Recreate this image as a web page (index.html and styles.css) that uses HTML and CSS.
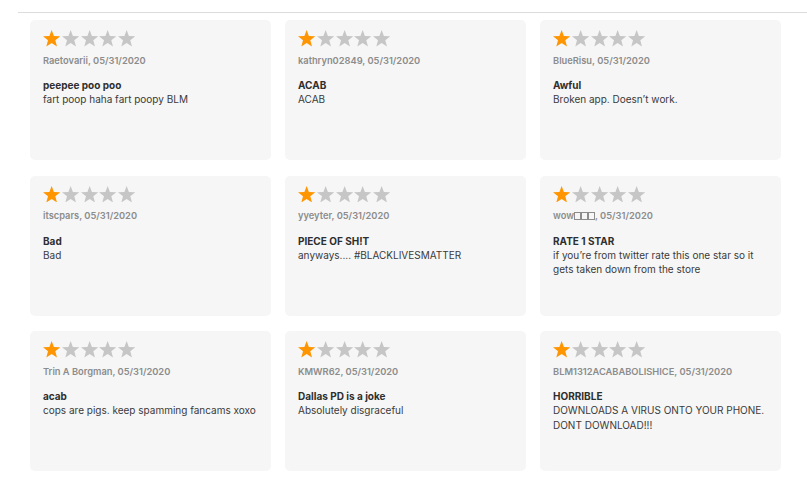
FILE: index.html
```html
<!DOCTYPE html>
<html>
<head>
<meta charset="utf-8">
<link rel="stylesheet" href="styles.css">
</head>
<body>
<svg width="0" height="0" class="defs">
  <defs>
    <polygon id="star" points="10,0 12.6,6.94 20,7.27 14.2,11.88 16.18,19.02 10,14.94 3.82,19.02 5.8,11.88 0,7.27 7.4,6.94"/>
  </defs>
</svg>
<main class="page">
  <section class="grid">
    <article class="card">
      <div class="stars"><svg viewBox="0 0 20 19.02" class="on"><use href="#star"/></svg><svg viewBox="0 0 20 19.02"><use href="#star"/></svg><svg viewBox="0 0 20 19.02"><use href="#star"/></svg><svg viewBox="0 0 20 19.02"><use href="#star"/></svg><svg viewBox="0 0 20 19.02"><use href="#star"/></svg></div>
      <div class="meta">Raetovarii, 05/31/2020</div>
      <div class="title">peepee poo poo</div>
      <div class="body">fart poop haha fart poopy BLM</div>
    </article>
    <article class="card">
      <div class="stars"><svg viewBox="0 0 20 19.02" class="on"><use href="#star"/></svg><svg viewBox="0 0 20 19.02"><use href="#star"/></svg><svg viewBox="0 0 20 19.02"><use href="#star"/></svg><svg viewBox="0 0 20 19.02"><use href="#star"/></svg><svg viewBox="0 0 20 19.02"><use href="#star"/></svg></div>
      <div class="meta">kathryn02849, 05/31/2020</div>
      <div class="title">ACAB</div>
      <div class="body">ACAB</div>
    </article>
    <article class="card">
      <div class="stars"><svg viewBox="0 0 20 19.02" class="on"><use href="#star"/></svg><svg viewBox="0 0 20 19.02"><use href="#star"/></svg><svg viewBox="0 0 20 19.02"><use href="#star"/></svg><svg viewBox="0 0 20 19.02"><use href="#star"/></svg><svg viewBox="0 0 20 19.02"><use href="#star"/></svg></div>
      <div class="meta">BlueRisu, 05/31/2020</div>
      <div class="title">Awful</div>
      <div class="body">Broken app. Doesn’t work.</div>
    </article>
    <article class="card">
      <div class="stars"><svg viewBox="0 0 20 19.02" class="on"><use href="#star"/></svg><svg viewBox="0 0 20 19.02"><use href="#star"/></svg><svg viewBox="0 0 20 19.02"><use href="#star"/></svg><svg viewBox="0 0 20 19.02"><use href="#star"/></svg><svg viewBox="0 0 20 19.02"><use href="#star"/></svg></div>
      <div class="meta">itscpars, 05/31/2020</div>
      <div class="title">Bad</div>
      <div class="body">Bad</div>
    </article>
    <article class="card">
      <div class="stars"><svg viewBox="0 0 20 19.02" class="on"><use href="#star"/></svg><svg viewBox="0 0 20 19.02"><use href="#star"/></svg><svg viewBox="0 0 20 19.02"><use href="#star"/></svg><svg viewBox="0 0 20 19.02"><use href="#star"/></svg><svg viewBox="0 0 20 19.02"><use href="#star"/></svg></div>
      <div class="meta">yyeyter, 05/31/2020</div>
      <div class="title">PIECE OF SH!T</div>
      <div class="body">anyways.... #BLACKLIVESMATTER</div>
    </article>
    <article class="card">
      <div class="stars"><svg viewBox="0 0 20 19.02" class="on"><use href="#star"/></svg><svg viewBox="0 0 20 19.02"><use href="#star"/></svg><svg viewBox="0 0 20 19.02"><use href="#star"/></svg><svg viewBox="0 0 20 19.02"><use href="#star"/></svg><svg viewBox="0 0 20 19.02"><use href="#star"/></svg></div>
      <div class="meta">wow<span class="box"></span><span class="box"></span><span class="box"></span>, 05/31/2020</div>
      <div class="title">RATE 1 STAR</div>
      <div class="body">if you’re from twitter rate this one star so it gets taken down from the store</div>
    </article>
    <article class="card">
      <div class="stars"><svg viewBox="0 0 20 19.02" class="on"><use href="#star"/></svg><svg viewBox="0 0 20 19.02"><use href="#star"/></svg><svg viewBox="0 0 20 19.02"><use href="#star"/></svg><svg viewBox="0 0 20 19.02"><use href="#star"/></svg><svg viewBox="0 0 20 19.02"><use href="#star"/></svg></div>
      <div class="meta">Trin A Borgman, 05/31/2020</div>
      <div class="title">acab</div>
      <div class="body">cops are pigs. keep spamming fancams xoxo</div>
    </article>
    <article class="card">
      <div class="stars"><svg viewBox="0 0 20 19.02" class="on"><use href="#star"/></svg><svg viewBox="0 0 20 19.02"><use href="#star"/></svg><svg viewBox="0 0 20 19.02"><use href="#star"/></svg><svg viewBox="0 0 20 19.02"><use href="#star"/></svg><svg viewBox="0 0 20 19.02"><use href="#star"/></svg></div>
      <div class="meta">KMWR62, 05/31/2020</div>
      <div class="title">Dallas PD is a joke</div>
      <div class="body">Absolutely disgraceful</div>
    </article>
    <article class="card">
      <div class="stars"><svg viewBox="0 0 20 19.02" class="on"><use href="#star"/></svg><svg viewBox="0 0 20 19.02"><use href="#star"/></svg><svg viewBox="0 0 20 19.02"><use href="#star"/></svg><svg viewBox="0 0 20 19.02"><use href="#star"/></svg><svg viewBox="0 0 20 19.02"><use href="#star"/></svg></div>
      <div class="meta">BLM1312ACABABOLISHICE, 05/31/2020</div>
      <div class="title">HORRIBLE</div>
      <div class="body">DOWNLOADS A VIRUS ONTO YOUR PHONE. DONT DOWNLOAD!!!</div>
    </article>
  </section>
</main>
</body>
</html>
```
FILE: styles.css
```css
html, body {
  margin: 0;
  padding: 0;
  background: #ffffff;
}
.defs {
  position: absolute;
  width: 0;
  height: 0;
}
body {
  font-family: Inter, "Noto Sans", "Liberation Sans", sans-serif;
  color: #333333;
}
.page {
  margin: 12px 0 0 18px;
  border-top: 1px solid #dcdcdc;
  padding: 7px 0 0 12px;
}
.grid {
  display: grid;
  grid-template-columns: repeat(3, 241px);
  column-gap: 14px;
  row-gap: 15.5px;
}
.card {
  background: #f6f6f6;
  border-radius: 5px;
  height: 140px;
  box-sizing: border-box;
  padding: 10px 13px;
}
.stars {
  display: flex;
  gap: 1.5px;
  height: 16.5px;
}
.stars svg {
  width: 17.3px;
  height: 16.5px;
  fill: #c6c6c6;
}
.stars svg.on {
  fill: #ff9500;
}
.meta {
  margin-top: 7px;
  font-size: 9.3px;
  line-height: 13px;
  font-weight: 600;
  color: #8c8c8c;
}
.box {
  display: inline-block;
  width: 6.5px;
  height: 8px;
  border: 1px solid #8c8c8c;
  box-sizing: border-box;
  margin-right: 0.5px;
  vertical-align: -0.5px;
}
.title {
  margin-top: 11.7px;
  font-size: 10px;
  line-height: 14px;
  font-weight: 700;
  color: #2e2e2e;
}
.body {
  font-size: 10px;
  line-height: 14.5px;
  color: #3a3a3a;
}
```
